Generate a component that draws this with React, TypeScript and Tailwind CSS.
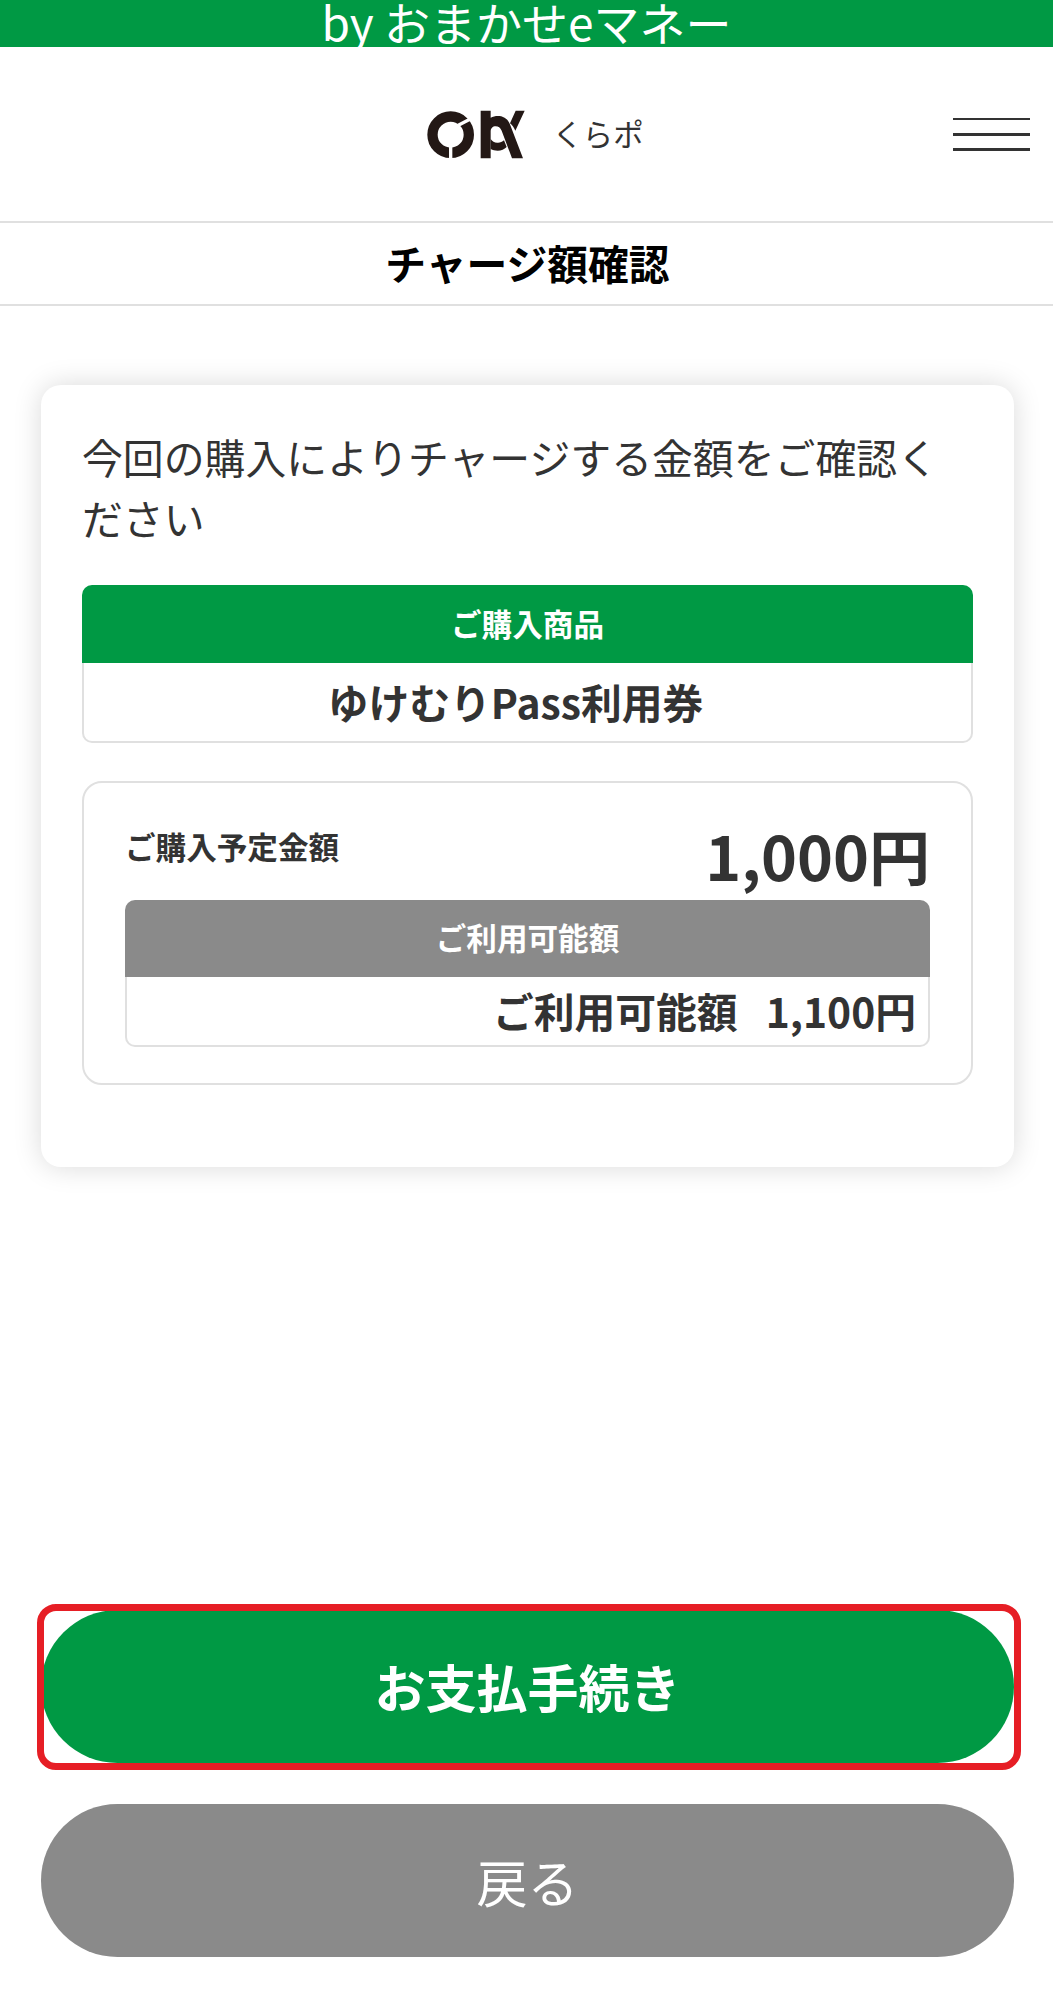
import { clsx } from "clsx";

const Logo = () => (
  <svg viewBox="0 0 294 147" className="h-[49px] w-[98px]" aria-label="OK">
    <circle cx="71" cy="74" r="54.5" fill="none" stroke="#231815" strokeWidth="31" />
    <path d="M71 100V147M94 46L140 22" stroke="#fff" strokeWidth="10" />
    <path d="M161 2h30v21c8-4 17-6 26-5c17 2 28 12 33 28l38 99h-33l-31-83c-4-9-10-13-18-13c-9 0-15 6-15 16v80h-30z" fill="#231815" />
    <path d="M191 87c5 8 13 12 22 11c7 0 13-3 18-7l8 20c-7 7-16 11-27 11c-8 0-15-2-21-5z" fill="#231815" />
    <path d="M266 2h27l-28 60c-4-9-9-16-16-22z" fill="#231815" />
  </svg>
);

const MenuIcon = () => (
  <svg viewBox="0 0 77 36" className="h-9 w-[77px]" stroke="#333" fill="none">
    <path d="M0 3H77" strokeWidth="2" />
    <path d="M0 18.5H77M0 33.5H77" strokeWidth="3" />
  </svg>
);

type LabeledBoxProps = {
  label: string;
  labelClass: string;
  bodyClass: string;
  children: React.ReactNode;
};

const LabeledBox = ({ label, labelClass, bodyClass, children }: LabeledBoxProps) => (
  <div>
    <div className={clsx("flex items-center justify-center rounded-t-[10px] pb-0.5 text-[30.6px] font-bold text-white", labelClass)}>
      {label}
    </div>
    <div className={clsx("flex items-center rounded-b-[10px] border-2 border-t-0 border-[#e0e0e0] text-[40.8px] font-bold", bodyClass)}>
      {children}
    </div>
  </div>
);

const App = () => {
  return (
    <div className="flex h-[2000px] w-[1053px] flex-col overflow-hidden bg-white font-['Noto_Sans_CJK_JP',sans-serif] leading-none text-[#333]">
      <div className="h-[47px] shrink-0 bg-[#009944] text-center text-[46px] leading-[42px] text-white">
        by おまかせeマネー
      </div>

      {/* Header */}
      <header className="grid h-[174px] shrink-0 grid-cols-[1fr_auto_1fr] items-center pr-[23px] pl-[41px]">
        <div />
        <div className="flex items-center gap-[27px]">
          <Logo />
          <span className="pb-0.5 text-[30.4px]">くらポ</span>
        </div>
        <button className="justify-self-end">
          <MenuIcon />
        </button>
      </header>

      <h1 className="flex h-[85px] shrink-0 items-center justify-center border-y-2 border-[#e0e0e0] pl-0.5 text-[40.8px] font-bold text-black">
        チャージ額確認
      </h1>

      <main className="flex flex-1 flex-col pr-[39px] pl-[41px]">
        <section className="mt-[79px] h-[782px] rounded-[20px] px-[41px] pt-[41px] shadow-[0_0_28px_rgba(0,0,0,0.15)]">
          <p className="text-[40.86px] leading-[61px]">
            今回の購入によりチャージする金額をご確認ください
          </p>

          <div className="mt-[37px]">
            <LabeledBox label="ご購入商品" labelClass="h-[78px] bg-[#009944]" bodyClass="h-[80px] justify-center pr-6">
              ゆけむりPass利用券
            </LabeledBox>
          </div>

          <div className="mt-[38px] h-[304px] rounded-[20px] border-2 border-[#e0e0e0] px-[41px] pt-[41px]">
            <div className="flex h-[76px] items-start justify-between font-bold">
              <span className="pt-[7px] text-[30.6px]">ご購入予定金額</span>
              <span className="text-[61px]">1,000円</span>
            </div>
            <LabeledBox label="ご利用可能額" labelClass="h-[77px] bg-[#8a8a8a]" bodyClass="h-[70px] justify-end gap-[28px] pr-3">
              <span>ご利用可能額</span>
              <span>1,100円</span>
            </LabeledBox>
          </div>
        </section>

        <div className="mt-[443px] flex flex-col gap-[41px]">
          <div className="relative">
            <button className="h-[153px] w-full rounded-full bg-[#009944] text-[51px] font-bold text-white">
              お支払手続き
            </button>
            <div className="pointer-events-none absolute -top-[6px] -right-[7px] -bottom-[7px] -left-[4px] rounded-[19px] border-[7px] border-[#e61e25]" />
          </div>
          <button className="h-[153px] w-full rounded-full bg-[#8a8a8a] pt-0.5 text-[51px] text-white">
            戻る
          </button>
        </div>
      </main>
    </div>
  );
};

export default App;
